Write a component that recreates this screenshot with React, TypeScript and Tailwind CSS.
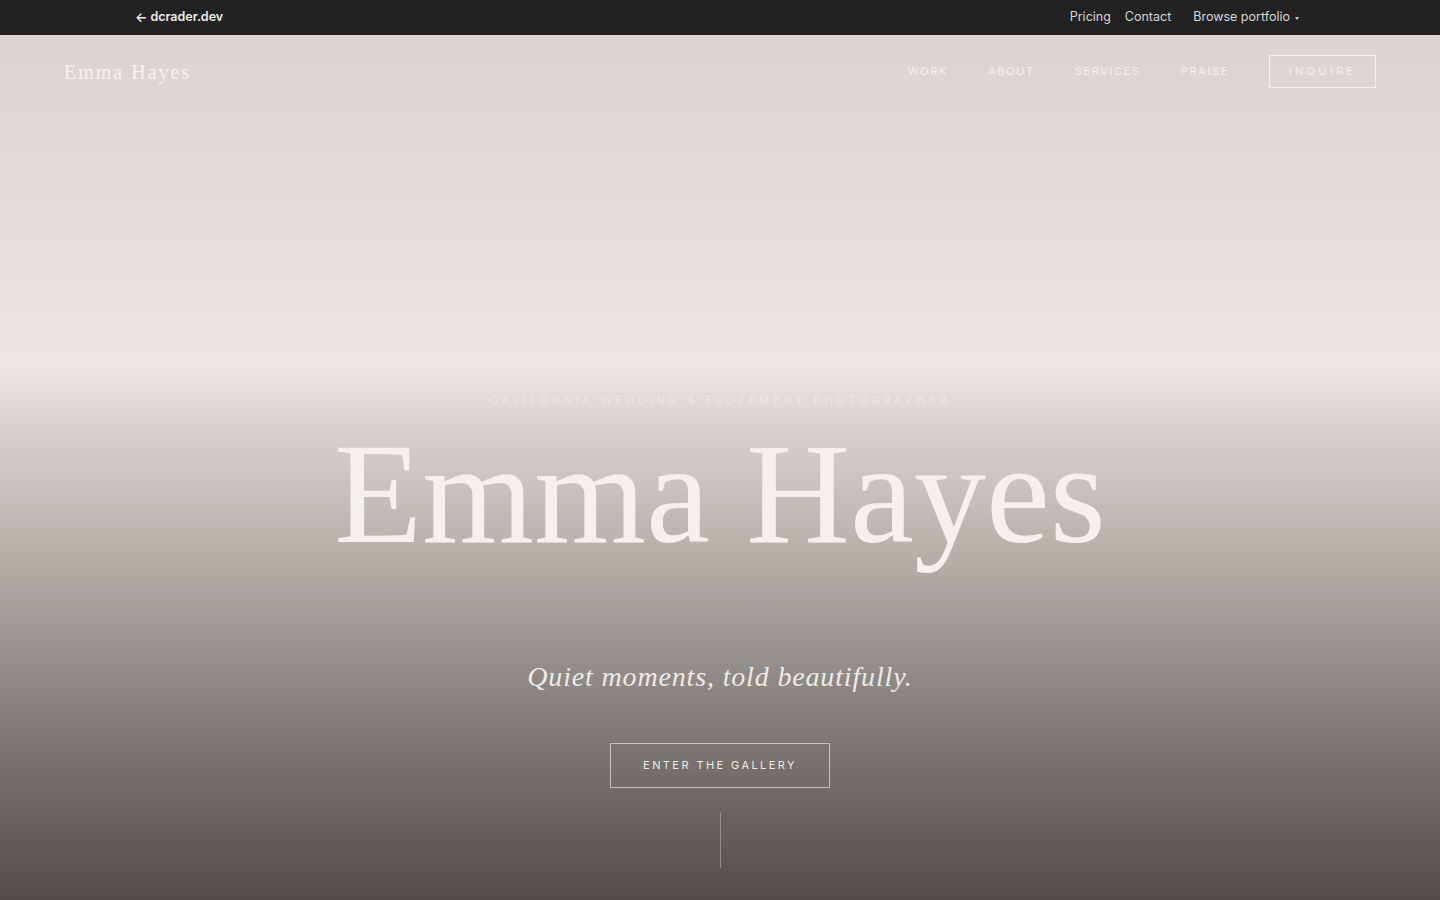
import React from 'react';

const sans = { fontFamily: 'Inter, "Liberation Sans", sans-serif' };
const serif = { fontFamily: '"Liberation Serif", "DejaVu Serif", serif' };

function TopBar() {
  return (
    <div className="h-[35px] bg-[#222222] text-[12.5px]" style={sans}>
      <div className="max-w-[1170px] mx-auto h-full flex items-center justify-between">
        <a className="font-semibold text-[#ececec] flex items-center gap-[3px]">
          <span className="text-[13px]">←</span>
          <span>dcrader.dev</span>
        </a>
        <div className="flex items-center text-[#d6d6d6] pr-[6px]">
          <span>Pricing</span>
          <span className="ml-[14px]">Contact</span>
          <span className="ml-[22px] flex items-center gap-[5px]">
            Browse portfolio
            <span className="mt-[2px] w-0 h-0 border-l-[2.5px] border-r-[2.5px] border-t-[3px] border-l-transparent border-r-transparent border-t-[#d6d6d6]" />
          </span>
        </div>
      </div>
    </div>
  );
}

function Nav() {
  const links = ['WORK', 'ABOUT', 'SERVICES', 'PRAISE'];
  return (
    <nav className="flex items-center justify-between px-16 pt-5">
      <div className="text-[20px] tracking-[0.1em] text-[#f6f3ee]" style={serif}>
        Emma Hayes
      </div>
      <div className="flex items-center gap-10 text-[11px] tracking-[0.15em] text-[#f5f2ed]/90" style={sans}>
        {links.map((l) => (
          <span key={l}>{l}</span>
        ))}
        <span className="h-[33px] w-[107px] border border-[#f5f2ed]/90 flex items-center justify-center tracking-[0.3em]">
          INQUIRE
        </span>
      </div>
    </nav>
  );
}

export default function App() {
  return (
    <div className="min-h-screen bg-[#524e49]">
      <TopBar />
      <section className="h-[865px] flex flex-col bg-[linear-gradient(180deg,#d8d5d0_0%,#e2dfda_22%,#ebe8e3_38%,#d5d2cd_46%,#b4b0aa_60%,#8f8b86_74%,#6f6b66_87%,#524e49_100%)]">
        <Nav />
        <div className="flex flex-col items-center">
          <p className="mt-[304px] text-[11px] leading-4 tracking-[0.35em] text-[#f3f0eb]/60" style={sans}>
            CALIFORNIA WEDDING &amp; ELOPEMENT PHOTOGRAPHER
          </p>
          <h1 className="mt-[14px] text-[144px] leading-none text-[#f4f1ec]" style={serif}>
            Emma Hayes
          </h1>
          <p className="mt-[95px] text-[28px] leading-8 italic tracking-[0.03em] text-[#eeebe6]" style={serif}>
            Quiet moments, told beautifully.
          </p>
          <a className="mt-[50px] h-[45px] w-[220px] border border-[#d9d6d1]/80 flex items-center justify-center text-[11px] tracking-[0.22em] text-[#f0ede8]" style={sans}>
            ENTER THE GALLERY
          </a>
          <div className="mt-6 h-[56px] w-px bg-[#a8a49f]/70" />
        </div>
      </section>
    </div>
  );
}
